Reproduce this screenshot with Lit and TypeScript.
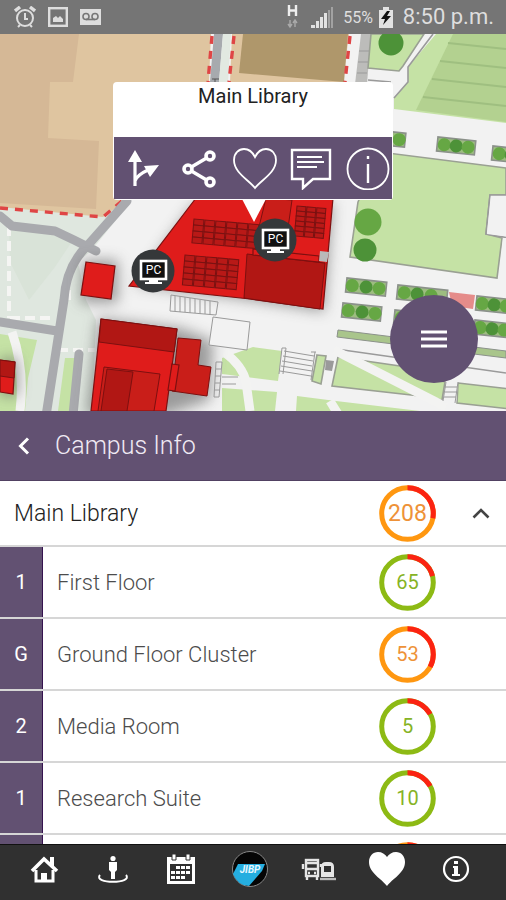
import { LitElement, html, svg, css, nothing } from "lit";
import { customElement, property } from "lit/decorators.js";

@customElement("count-ring")
class CountRing extends LitElement {
  @property({ type: Number }) value?: number;
  @property({ type: Number }) used = 0;
  @property() tone = "green";
  @property({ type: Boolean }) large = false;

  static styles = css`
    :host { display: grid; width: 57px; height: 57px; place-items: center; }
    svg, span { grid-area: 1 / 1; }
    svg { width: 57px; height: 57px; }
    circle { fill: none; stroke-width: 5; }
    .green { stroke: #8dba14; color: #86b325; }
    .orange { stroke: #ff9710; color: #ee9238; }
    .used { stroke: #fb2312; }
    span { font-size: 20px; }
    .large { font-size: 23px; }
  `;

  render() {
    return html`
      <svg viewBox="0 0 57 57" aria-hidden="true">
        <circle class=${this.tone} cx="28.5" cy="28.5" r="25.8"></circle>
        <circle class="used" cx="28.5" cy="28.5" r="25.8" pathLength="100"
          stroke-dasharray="${this.used} 100" transform="rotate(-90 28.5 28.5)"></circle>
      </svg>
      ${this.value === undefined
        ? nothing
        : html`<span class="${this.tone} ${this.large ? "large" : ""}">${this.value}</span>`}
    `;
  }
}

/* Grid of roof panels, laid out in local coordinates and turned onto the roof. */
const panels = (x: number, y: number, cols: number, rows: number, w: number, h: number) => {
  const cells = [];
  for (let c = 0; c < cols; c++)
    for (let r = 0; r < rows; r++)
      cells.push(svg`<rect x=${c * w} y=${r * h} width=${w - 1} height=${h}></rect>`);
  return svg`<g class="panel" transform="translate(${x} ${y}) rotate(5)">${cells}</g>`;
};

const hedge = (x: number, y: number, w: number, trees: number[]) => svg`
  <g transform="translate(${x} ${y}) rotate(6)">
    <rect class="hedge" width=${w} height="14"></rect>
    ${trees.map((t, i) => svg`<circle class=${i % 2 ? "tree dark" : "tree"} cx=${t} cy="7" r="6.5"></circle>`)}
  </g>`;

const pin = (x: number, y: number) => svg`
  <g transform="translate(${x} ${y})">
    <circle r="21.5" fill="#35383a"></circle>
    <rect x="-12" y="-10" width="25" height="18" fill="#111" stroke="#fff" stroke-width="2.6"></rect>
    <path d="M-4 9H5V11H9V13H-8V11H-4Z" fill="#fff"></path>
    <text class="pc" x="0.5" y="3" text-anchor="middle">PC</text>
  </g>`;

@customElement("campus-map")
class CampusMap extends LitElement {
  static styles = css`
    :host { display: block; overflow: hidden; background: #f1f1f1; }
    svg { display: block; width: 100%; height: 100%; }
    .road { fill: none; stroke: #a9aaae; stroke-width: 9; stroke-linejoin: round; stroke-linecap: round; }
    .dash { fill: none; stroke: #df4545; stroke-width: 3.4; stroke-dasharray: 8 7; }
    .white { fill: none; stroke: #f5f5f3; stroke-width: 4; stroke-dasharray: 10 5; }
    .path { fill: none; stroke: #f3f3f2; stroke-width: 9; }
    .lawn { fill: #c5e2a5; stroke: #9aa093; stroke-width: 1.6; }
    .grass { fill: #c5e2a5; }
    .edge { fill: none; stroke: #9a9a9a; stroke-width: 1.6; }
    .thin { fill: none; stroke: #9a9a9a; stroke-width: 1; }
    .block { fill: #f2f2f2; }
    .tree { fill: #66a744; }
    .dark { fill: #4d9238; }
    .hedge { fill: #9dbd80; stroke: #8b918a; stroke-width: 1.6; }
    .roof { fill: #df1c1b; stroke: #7d1010; stroke-width: 1.2; }
    .deep { fill: #b11714; stroke: #7d1010; stroke-width: 1; }
    .mid { fill: #c91e19; }
    .panel rect { fill: #b81917; stroke: #7a1212; stroke-width: 1; }
    .pc { font: 400 12px Roboto, "Liberation Sans", sans-serif; fill: #fff; }
  `;

  render() {
    return html`
      <svg viewBox="0 34 506 377" preserveAspectRatio="xMidYMid slice" role="img" aria-label="Campus map">
        <defs>
          <filter id="shade" x="-30%" y="-30%" width="160%" height="160%">
            <feGaussianBlur stdDeviation="7"></feGaussianBlur>
          </filter>
        </defs>
        <rect x="0" y="34" width="506" height="377" fill="#f2f2f2"></rect>

        <path d="M0 200L128 205L92 250L78 262L86 300L96 320L92 411H0Z" fill="#dfe7df"></path>
        <path d="M9 230L75 237L55 267L29 300L10 262Z" fill="#d9e3d8"></path>
        <path class="white" d="M9 226V318M10 318H52M58 350H96M69 290V300"></path>
        <path d="M0 334L37 340L28 378L25 411H0Z" fill="#c5e2a5"></path>
        <path d="M65 358H76L70 411H58Z" fill="#c5e2a5"></path>
        <path class="path" d="M12 332Q25 370 20 411"></path>

        <path d="M0 34H211L209 82L220 170L122 203L103 217L0 207Z" fill="#dfc5a0"></path>
        <path d="M0 34H79L73 82H50L48 138L99 141L96 209L0 203Z" fill="#d5b896"></path>
        <path d="M232 34H349L343 82H230Z" fill="#dfc5a0"></path>
        <path d="M243 34H348L344 82L239 73Z" fill="#af976b"></path>
        <path d="M214 34H223L219 82H210Z" fill="#a7aaae"></path>
        <path d="M223 34H231L228 82H219Z" fill="#e2e9e1"></path>
        <path class="dash" d="M212 36L208 82M234 36L229 82M350 36L345 82M0 208L103 217L122 201"></path>
        <path d="M212 79H219M215 79V84" stroke="#555"></path>

        <path d="M361 34H371L367 84H355Z" fill="#bcbcba"></path>
        <path class="thin" d="M359 51H370M358 62H368M357 73H367"></path>
        <path class="lawn" d="M371 34H424L403 66L399 71L368 68Z"></path>
        <path class="grass" d="M436 34H506V123L394 109V98L408 82V67Z"></path>
        <path class="edge" d="M433 34L408 67V82L394 98M368 80L391 82"></path>
        <path d="M453 34H506V122L416 110Z" fill="#b3d190"></path>
        <path d="M448 43L506 49M440 61L506 68M432 79L506 87M423 97L506 106" stroke="#9fbf80" stroke-width="2"></path>
        <circle class="tree dark" cx="391" cy="43" r="12.5"></circle>
        ${hedge(384, 131, 22, [16])}
        ${hedge(438, 137, 38, [7, 19, 31])}
        ${hedge(493, 146, 28, [7, 19])}

        <path class="lawn" d="M358 202L380 152L506 168V195L490 195L486 234L502 238L497 278L350 257Z"></path>
        <path class="block edge" d="M510 195H490L486 234L510 238Z"></path>
        <path class="block" d="M491 196H510V237L487 234Z"></path>
        <path class="block" d="M503 238H510V285H498Z"></path>
        <circle class="tree" cx="368" cy="222" r="13.5"></circle>
        <circle class="tree dark" cx="365" cy="250" r="11.5"></circle>
        ${hedge(347, 278, 40, [6, 20, 33])}
        ${hedge(343, 303, 39, [6, 20, 33])}
        ${hedge(398, 285, 50, [7, 20, 34])}
        ${hedge(395, 310, 40, [7, 20])}
        <path d="M449 292L475 295L473 309L452 306Z" fill="#e58c8a"></path>
        ${hedge(477, 296, 40, [6, 18, 30])}
        ${hedge(475, 320, 40, [6, 18, 30])}
        <path d="M338 330L506 351V358L337 337Z" fill="#a9c58b" stroke="#8b918a"></path>
        <path class="edge" d="M336 349L506 373"></path>

        <path class="grass" d="M253 347L282 351L278 381L222 374V358Z"></path>
        <path class="grass" d="M222 388L277 392L275 411H222Z"></path>
        <path class="grass" d="M297 396L336 401L420 411H296Z"></path>
        <path class="lawn" d="M317 355L326 356L321 384L312 381Z"></path>
        <path class="lawn" d="M338 357L400 366L445 382L442 400L420 396L332 386Z"></path>
        <path class="lawn" d="M458 383L510 389V409L457 403Z"></path>
        <path class="path" d="M224 352Q243 366 246 382L250 411M330 401L338 414M334 350L446 407"></path>
        <path class="block" d="M282 350H314L310 380L279 375Z"></path>
        <path class="thin" d="M282 348L279 374M315 352L311 380M284 351L314 356M283 356L313 361M282 361L312 366M281 366L312 371M280 371L311 376M282 348H286L283 374M311 352H316"></path>
        <path d="M326 360L334 361L332 371L325 370Z" fill="#9a9a9a"></path>
        <path class="block" d="M446 382H458L456 403H443Z"></path>
        <path class="thin" d="M446 382L443 401M458 382L455 403M445 387H457M445 392H457M444 397H456"></path>

        <path class="road" d="M0 216L12 226L55 231L74 240L96 251M127 201L88 245Q66 266 64 300L46 416M0 322L57 331"></path>
        <path class="road" d="M79 354L73 415"></path>

        <g filter="url(#shade)" fill="#555" opacity="0.55">
          <path d="M195 203H333L324 312L250 300L135 285Z"></path>
          <path d="M82 260H118V303H80Z"></path>
          <path d="M98 318L180 328L213 341L210 400L167 415H86Z"></path>
          <path d="M0 358H18V396H0Z"></path>
        </g>
        <path class="thin" d="M171 295L218 302L216 315L170 311ZM175 296V311M180 296V312M185 297V312M190 298V313M195 299V313M200 300V314M205 300V314M210 301V315"></path>
        <path class="block" d="M213 317L250 322L247 350L209 345Z"></path>
        <path class="thin" d="M250 322L213 317L209 345L247 350L250 322"></path>
        <path class="thin" d="M216 362H222L219 397H214ZM216 369H221M215 376H221M215 383H220M214 390H220M222 377H238M222 384H236"></path>

        <path class="roof" d="M196 198H333L323 309L250 299L129 286Z"></path>
        ${panels(194, 219, 6, 4, 11, 6)}
        ${panels(185, 255, 5, 5, 11, 6)}
        <path class="deep mid" d="M266 198L292 200L287 235L258 231Z"></path>
        ${panels(297, 206, 3, 6, 10, 5)}
        <path class="deep" d="M247 254L325 263L320 309L244 298Z"></path>
        <path class="roof" d="M253 249L319 256V262L253 255Z"></path>
        <path d="M320 251L329 252L327 262L319 261Z" fill="#b9b9b9"></path>
        <path d="M242 199H266L254 222Z" fill="#fff"></path>

        <path class="roof" d="M86 262L115 266L111 299L81 295Z"></path>
        <path class="roof" d="M101 319L177 329L166 411H91Z"></path>
        <path class="deep" d="M101 319L177 329L174 352L99 342Z"></path>
        <path class="deep mid" d="M104 367L160 374L154 411H98Z"></path>
        <path class="deep" d="M107 369L133 372L127 411H101Z"></path>
        <path class="deep mid" d="M178 338L201 340L198 365L211 367L207 396L172 391Z"></path>
        <path class="roof" d="M172 364L179 365L175 391L168 390Z"></path>
        <path class="roof" d="M0 360L15 362L13 394L0 392Z"></path>
        <path class="deep" d="M0 360L15 362L14 378L0 376Z"></path>
        ${pin(153, 271)}
        ${pin(275, 240)}
      </svg>
    `;
  }
}

const statusIcons = html`
  <svg width="22" height="22" viewBox="0 0 22 22" fill="none" stroke="#dedede" stroke-width="2" aria-label="Alarm">
    <circle cx="11" cy="12" r="8"></circle><path d="M11 7V13H14M6 19L4 21M16 19L18 21"></path>
    <path d="M1 5L6 1M21 5L16 1" stroke-width="3.4"></path>
  </svg>
  <svg width="20" height="20" viewBox="0 0 20 20" aria-label="Picture">
    <rect x="1.2" y="1.2" width="17.6" height="17.6" fill="none" stroke="#dedede" stroke-width="2.4"></rect>
    <path d="M5 15V11L8 9L10 11L12 9L15 12V15Z" fill="#dedede"></path>
  </svg>
  <svg width="21" height="16" viewBox="0 0 21 16" aria-label="Voicemail">
    <rect width="21" height="16" fill="#dedede"></rect>
    <g fill="none" stroke="#777" stroke-width="1.6"><circle cx="6" cy="7.5" r="3"></circle><circle cx="15" cy="7.5" r="3"></circle><path d="M6 10.5H15"></path></g>
  </svg>`;

const popupActions = [
  { label: "Directions", icon: svg`<path d="M16 40V12M16 35Q18 29 29 24" stroke-width="3.2"></path><path d="M16 4L23 16H9ZM40 19L31 31L25 20Z" fill="#fff" stroke="none"></path>` },
  { label: "Share", icon: svg`<path d="M12 23L34 10M12 23L34 36" stroke-width="3.4"></path><g fill="#625172" stroke-width="3.6"><circle cx="12" cy="23" r="4"></circle><circle cx="34" cy="10" r="4"></circle><circle cx="34" cy="36" r="4"></circle></g>` },
  { label: "Favourite", icon: svg`<path d="M22 42C16 34 1 27 1 14C1 7 6 3 11 3C17 3 20 7 22 11C24 7 28 3 33 3C39 3 43 8 43 14C43 27 28 34 22 42Z" stroke-width="1.8"></path>` },
  { label: "Comment", icon: svg`<path d="M3 4H41V33H24L14 42V33H3Z" stroke-width="2.4"></path><path d="M8 11H33M8 16H35M8 21H28" stroke-width="2"></path>` },
  { label: "Information", icon: svg`<circle cx="22" cy="23" r="20.5" stroke-width="1.8"></circle><path d="M22 18V37M22 10V13" stroke-width="2.4"></path>` },
];

const navItems = [
  { label: "Home", icon: svg`<path d="M7 20L19 8L32 20" fill="none" stroke="#fff" stroke-width="3.6"></path><path d="M25 6H29V16L25 12Z" fill="#fff"></path><path d="M11 19V30H28V19" fill="none" stroke="#fff" stroke-width="3"></path><path d="M16 22H22V31H16Z" fill="#fff"></path>` },
  { label: "Street view", icon: svg`<circle cx="19" cy="7.5" r="2.6" fill="#fff"></circle><path d="M15 11H23V19L21 21V28H17V21L15 19Z" fill="#fff"></path><path d="M6 24C-2 33 40 33 32 24" fill="none" stroke="#fff" stroke-width="2"></path>` },
  { label: "Calendar", icon: svg`<path d="M5 6H33V33H5Z" fill="#fff"></path><path d="M8 13H30V30H8Z" fill="#303030"></path><path d="M10 3H14V9H10ZM24 3H28V9H24Z" fill="#fff" stroke="#303030"></path><path d="M14 15H18V18H14ZM19 15H23V18H19ZM24 15H28V18H24ZM9 20H13V23H9ZM14 20H18V23H14ZM19 20H23V23H19ZM24 20H28V23H24ZM9 25H13V28H9ZM14 25H18V28H14ZM19 25H23V28H19Z" fill="#fff"></path>` },
  { label: "University", icon: svg`<circle cx="19" cy="18" r="17.5" fill="#050505" stroke="#888"></circle><path d="M7 13H34L31 20L18 35Q7 35 2 23Z" fill="#25aee0"></path><text x="19" y="22" text-anchor="middle" class="mark">JIBP</text>` },
  { label: "Transport", icon: svg`<g fill="none" stroke="#e5e5e5" stroke-width="2.4"><rect x="6" y="9" width="12" height="16"></rect><path d="M6 18H18M6 12H18M3 13V18M21 13V16M8 22H10M14 22H16M7 25V29M17 25V29"></path></g><path d="M21 26V16Q21 11 26 11H29Q34 11 34 16V26Z" fill="#e5e5e5"></path><path d="M24 15H31V21H24Z" fill="#303030"></path><path d="M20 28H36" stroke="#bbb" stroke-width="2.4"></path>` },
  { label: "Favourites", icon: svg`<path d="M19 35C14 28 1 22 1 11C1 5 5 1 10 1C14 1 17 3 19 6C21 3 24 1 28 1C33 1 37 5 37 11C37 22 24 28 19 35Z" fill="#fff"></path>` },
  { label: "About", icon: svg`<circle cx="19" cy="18" r="12" fill="none" stroke="#fff" stroke-width="2.2"></circle><path d="M17 10H21V13H17ZM16 15H21V23H23V25H15V23H17V17H16Z" fill="#fff"></path>` },
];

/* The last room has its ring ready before its name and count are loaded. */
const rooms = [
  { floor: "1", name: "First Floor", value: 65, used: 21, tone: "green" },
  { floor: "G", name: "Ground Floor Cluster", value: 53, used: 33, tone: "orange" },
  { floor: "2", name: "Media Room", value: 5, used: 17, tone: "green" },
  { floor: "1", name: "Research Suite", value: 10, used: 17, tone: "green" },
  { floor: "", name: "", value: undefined, used: 25, tone: "orange" },
];

@customElement("app-root")
class AppRoot extends LitElement {
  static styles = css`
    :host {
      display: grid; height: 100vh; overflow: hidden;
      grid-template-rows: 34px minmax(0, 377fr) minmax(0, 433fr) 56px;
      font-family: Roboto, "Liberation Sans", sans-serif; background: #fff;
    }
    button { border: 0; padding: 0; background: none; color: inherit; font: inherit; cursor: pointer; }
    svg { display: block; flex: none; }
    .status { display: flex; align-items: center; gap: 12px; padding: 0 12px 0 14px; background: #757575; color: #dedede; }
    .status .right { display: flex; align-items: center; gap: 6px; margin-left: auto; }
    .radio { display: flex; align-items: center; gap: 10px; }
    .percent { font-size: 16px; padding-left: 3px; }
    .clock { font-size: 22px; line-height: 34px; padding-left: 4px; }
    .stage { position: relative; display: grid; }
    campus-map { grid-area: 1 / 1; min-height: 0; }
    .popup { position: absolute; top: 48px; left: 50%; width: 280px; transform: translateX(-50%); background: #fff; border-radius: 4px; }
    .popup h2 { margin: 0; height: 55px; font-size: 20px; font-weight: 400; line-height: 28px; text-align: center; color: #222; }
    .actions { display: flex; justify-content: space-between; margin: 0 1px 1px; padding: 9px 2px 9px 5px; background: #625172; }
    .actions button { width: 44px; height: 44px; }
    .actions svg { fill: none; stroke: #fff; }
    .menu { position: absolute; right: 28px; bottom: 28px; width: 88px; height: 88px; border-radius: 50%; background: #625172; display: grid; place-items: center; }
    .panel { display: flex; flex-direction: column; overflow: hidden; background: #fff; }
    .bar { flex: none; box-sizing: border-box; display: flex; align-items: center; gap: 23px; height: 70px; padding: 0 16px; background: #625172; color: #f0eaf4; border-bottom: 1px solid #514162; }
    .bar h1 { margin: 0; font-size: 25px; font-weight: 300; line-height: 32px; }
    .row { flex: none; box-sizing: border-box; display: grid; grid-template-columns: 1fr 57px 70px; align-items: center; height: 72px; border-bottom: 2px solid #d6d6d6; font-size: 22px; font-weight: 300; color: #4c4c4c; text-align: left; }
    .summary { width: 100%; height: 66px; font-size: 23px; color: #222; }
    .summary .name { padding-left: 14px; }
    .summary svg { justify-self: end; margin-right: 16px; }
    .rooms { margin: 0; padding: 0; list-style: none; }
    .room { grid-template-columns: 43px 1fr 57px 70px; }
    .floor { box-sizing: border-box; height: 100%; display: grid; place-items: center; background: #625172; border-right: 1px solid #36134f; color: #fff; font-size: 20px; font-weight: 400; }
    .room .name { padding-left: 14px; }
    count-ring { font-weight: 400; }
    nav { display: flex; justify-content: space-between; align-items: flex-start; padding: 6px 31px 0 25px; background: #303030; border-top: 1px solid #111; }
    nav a { display: block; }
    .mark { font: italic 700 10px Roboto, sans-serif; fill: #e8f8ff; }
  `;

  render() {
    return html`
      <header class="status">
        ${statusIcons}
        <div class="right">
          <div class="radio">
            <svg width="14" height="26" viewBox="0 0 14 26" aria-label="Mobile data">
              <path d="M3 1V12M10 1V12M3 6.5H10" stroke="#eee" stroke-width="2.4"></path>
              <path d="M4 16V22M2 20L4 23L6 20M9 23V17M7 19L9 16L11 19" fill="none" stroke="#aaa" stroke-width="1.4"></path>
            </svg>
            <svg width="24" height="22" viewBox="0 0 24 22" aria-label="Signal">
              <path d="M1 22V19H5V22ZM6 22V15H9V22ZM10 22V11H13V22ZM14 22V7H17V22Z" fill="#e2e2e2"></path>
              <path d="M18 22V4H20V22ZM21 22V1H23V22Z" fill="#a2a2a2"></path>
            </svg>
          </div>
          <span class="percent">55%</span>
          <svg width="14" height="21" viewBox="0 0 14 21" aria-label="Charging">
            <path d="M4 0H10V3H14V21H0V3H4Z" fill="#e2e2e2"></path><path d="M8 4L2 12H6L4 18L12 9H8L11 4Z" fill="#111"></path>
          </svg>
          <time class="clock">8:50 p.m.</time>
        </div>
      </header>
      <section class="stage">
        <campus-map></campus-map>
        <div class="popup">
          <h2>Main Library</h2>
          <div class="actions">
            ${popupActions.map((a) => html`<button aria-label=${a.label}><svg width="44" height="44" viewBox="0 0 44 44">${a.icon}</svg></button>`)}
          </div>
        </div>
        <button class="menu" aria-label="Menu">
          <svg width="26" height="20" viewBox="0 0 26 20"><path d="M0 3H26M0 10H26M0 17H26" stroke="#fff" stroke-width="2.8"></path></svg>
        </button>
      </section>
      <main class="panel">
        <div class="bar">
          <button aria-label="Back"><svg width="16" height="18" viewBox="0 0 16 18"><path d="M12 1.5L4.5 9L12 16.5" fill="none" stroke="#fff" stroke-width="3"></path></svg></button>
          <h1>Campus Info</h1>
        </div>
        <button class="row summary" aria-expanded="true">
          <span class="name">Main Library</span>
          <count-ring large .value=${208} .used=${28} .tone=${"orange"}></count-ring>
          <svg width="18" height="12" viewBox="0 0 18 12"><path d="M1.5 10.5L9 3L16.5 10.5" fill="none" stroke="#444" stroke-width="2.6"></path></svg>
        </button>
        <ul class="rooms">
          ${rooms.map((r) => html`
            <li class="row room">
              <span class="floor">${r.floor}</span>
              <span class="name">${r.name}</span>
              <count-ring .value=${r.value} .used=${r.used} .tone=${r.tone}></count-ring>
            </li>`)}
        </ul>
      </main>
      <nav>
        ${navItems.map((n) => html`<a href="#" aria-label=${n.label}><svg width="38" height="38" viewBox="0 0 38 38">${n.icon}</svg></a>`)}
      </nav>
    `;
  }
}
